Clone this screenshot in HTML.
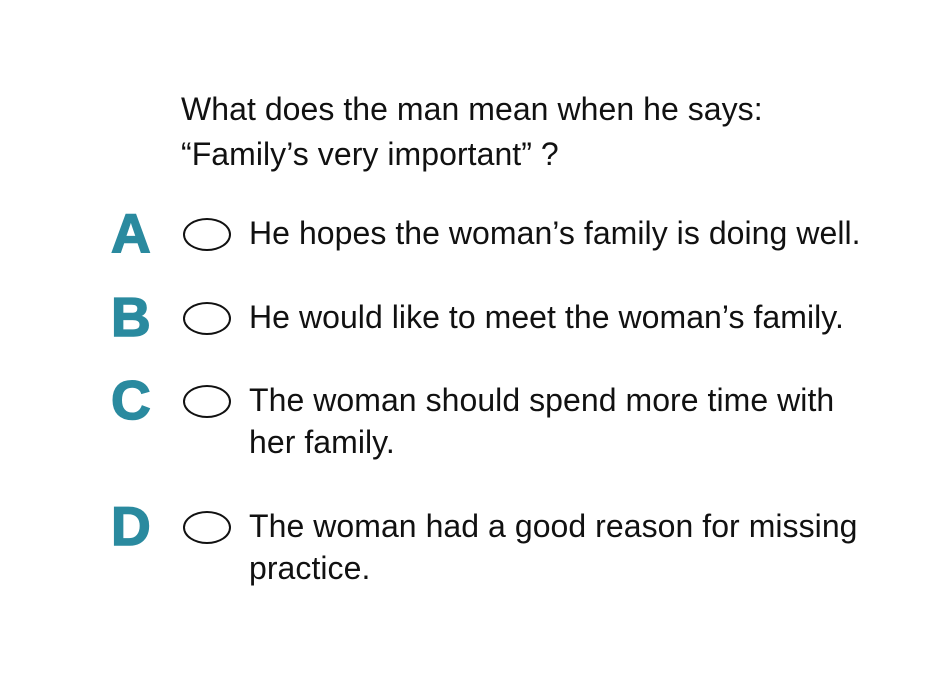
<!DOCTYPE html>
<html><head><style>
body{margin:0;width:941px;height:691px;background:#fff;position:relative;overflow:hidden;font-family:"Liberation Sans",Arial,sans-serif;color:#111}
.t{position:absolute;font-size:32px;line-height:42px;white-space:nowrap;letter-spacing:0.05px}
.L{position:absolute;font-weight:bold;font-size:55px;color:#2a8a9f;line-height:1;-webkit-text-stroke:1.5px #2a8a9f}
.o{position:absolute;width:44px;height:29px;border:2.6px solid #111;border-radius:50%}
</style></head><body>
<div class="t" style="left:181px;top:87px;line-height:45px">What does the man mean when he says:<br>“Family’s very important” ?</div>

<div class="L" style="left:111px;top:206px">A</div>
<div class="o" style="left:183px;top:218px"></div>
<div class="t" style="left:249px;top:212px">He hopes the woman’s family is doing well.</div>

<div class="L" style="left:111px;top:290px">B</div>
<div class="o" style="left:183px;top:302px"></div>
<div class="t" style="left:249px;top:296px">He would like to meet the woman’s family.</div>

<div class="L" style="left:111px;top:373px">C</div>
<div class="o" style="left:183px;top:385px"></div>
<div class="t" style="left:249px;top:379px">The woman should spend more time with<br>her family.</div>

<div class="L" style="left:111px;top:499px">D</div>
<div class="o" style="left:183px;top:511px"></div>
<div class="t" style="left:249px;top:505px">The woman had a good reason for missing<br>practice.</div>
</body></html>
